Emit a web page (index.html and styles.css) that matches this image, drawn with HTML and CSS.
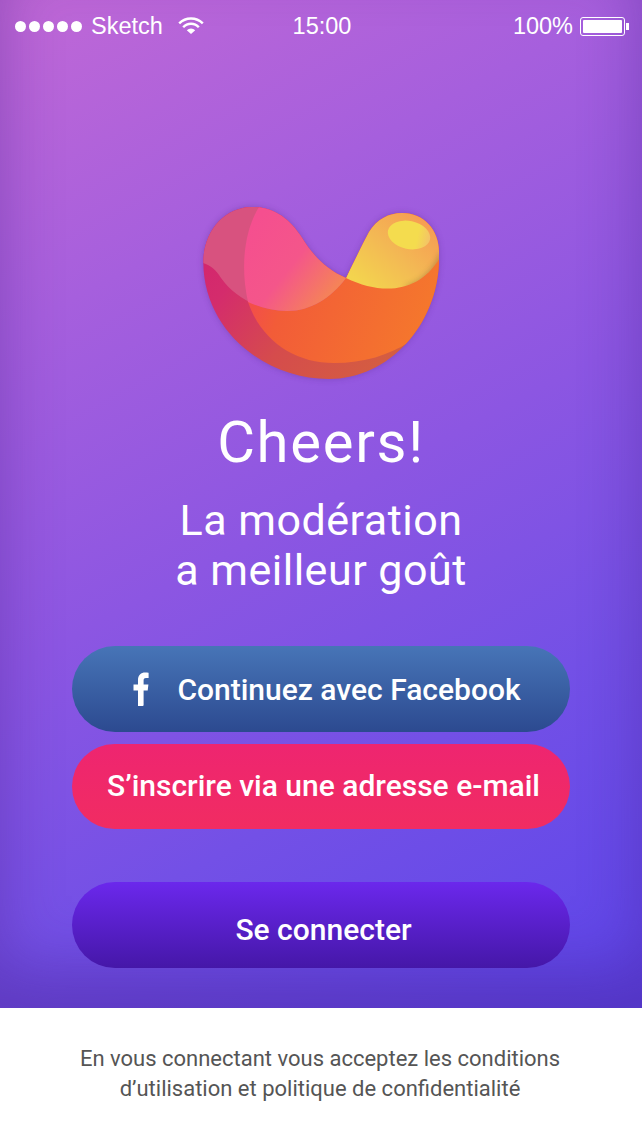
FILE: index.html
```html
<!DOCTYPE html>
<html lang="fr">
<head>
    <meta charset="UTF-8">
    <meta name="viewport" content="width=device-width, initial-scale=1.0">
    <title>Cheers!</title>
    <link rel="stylesheet" href="styles.css">
</head>
<body>

    <div class="hero">
        <!-- Barre de statut -->
        <div class="status-bar">
            <div class="status-left">
                <span class="signal"><i></i><i></i><i></i><i></i><i></i></span>
                <span>Sketch</span>
                <svg class="wifi" viewBox="0 0 26 17" width="26" height="17">
                    <path d="M1.2 6.4 A16.5 16.5 0 0 1 24.8 6.4" fill="none" stroke="#fff" stroke-width="2.4"/>
                    <path d="M5.2 10.2 A10.5 10.5 0 0 1 20.8 10.2" fill="none" stroke="#fff" stroke-width="2.4"/>
                    <path d="M8.8 13.2 A6 6 0 0 1 17.2 13.2 L13 17 Z" fill="#fff"/>
                </svg>
            </div>
            <span class="status-time">15:00</span>
            <div class="status-right">
                <span>100%</span>
                <span class="battery"><b></b></span>
                <span class="battery-cap"></span>
            </div>
        </div>

        <svg class="logo" viewBox="196 200 252 188" width="252" height="188">
            <defs>
                <linearGradient id="shell" x1="0" y1="0" x2="1" y2="0.6">
                    <stop offset="0" stop-color="#d2206f"/>
                    <stop offset="0.3" stop-color="#d42c6c"/>
                    <stop offset="0.6" stop-color="#d54c4c"/>
                    <stop offset="1" stop-color="#d4603f"/>
                </linearGradient>
                <linearGradient id="body" x1="0" y1="0.2" x2="1" y2="0.5">
                    <stop offset="0" stop-color="#f43e5e"/>
                    <stop offset="0.3" stop-color="#f25c38"/>
                    <stop offset="1" stop-color="#f5782c"/>
                </linearGradient>
                <linearGradient id="lobe" x1="0.1" y1="0.2" x2="0.9" y2="0.9">
                    <stop offset="0" stop-color="#f54f8f"/>
                    <stop offset="0.5" stop-color="#f4568a"/>
                    <stop offset="1" stop-color="#f58a50"/>
                </linearGradient>
                <linearGradient id="knob" x1="0.1" y1="0.9" x2="0.9" y2="0.1">
                    <stop offset="0" stop-color="#f3d44e"/>
                    <stop offset="0.45" stop-color="#f3b854"/>
                    <stop offset="1" stop-color="#f79552"/>
                </linearGradient>
                <linearGradient id="spot" x1="0" y1="0.5" x2="1" y2="0.5">
                    <stop offset="0.7" stop-color="#f4dc4e"/>
                    <stop offset="1" stop-color="#f3c268"/>
                </linearGradient>
                <clipPath id="blob">
                    <path d="M204.3 263 C204 232 225 207 253 207 C275 207 291 219 303 238 C314 256 328 270 347 278 C354 264 362 247 370 232 C378 219 390 213 403 213 C425 213 440 230 440 252 L440 262 C438 325 390 379 330 379 C265 379 205 330 204.3 263 Z"/>
                </clipPath>
                <clipPath id="knob-clip">
                    <path d="M347 278 L370 225 L400 205 L448 205 L440 259 C420 292 384 296 347 278 Z"/>
                </clipPath>
                <filter id="soft" x="-10%" y="-10%" width="120%" height="125%">
                    <feGaussianBlur stdDeviation="3"/>
                </filter>
                <filter id="soft-edge" x="-20%" y="-20%" width="140%" height="140%">
                    <feGaussianBlur stdDeviation="3"/>
                </filter>
            </defs>
            <path d="M204.3 263 C204 232 225 207 253 207 C275 207 291 219 303 238 C314 256 328 270 347 278 C354 264 362 247 370 232 C378 219 390 213 403 213 C425 213 440 230 440 252 L440 262 C438 325 390 379 330 379 C265 379 205 330 204.3 263 Z" fill="#5a2a90" opacity="0.4" filter="url(#soft)"/>
            <g clip-path="url(#blob)">
                <rect x="196" y="200" width="252" height="188" fill="url(#shell)"/>
                <!-- corps orange -->
                <path d="M244 200 L249 302 C262 340 295 363 335 363 C365 363 390 355 410 342 L448 310 L448 200 Z" fill="url(#body)"/>
                <!-- lobe rose -->
                <path d="M196 262 C208 262 216 268 222 278 C236 298 262 311 288 311 C312 311 332 298 347 278 L340 200 L196 200 Z" fill="#d8527f"/>
                <path d="M265 200 C247 222 240 262 249 302 C262 308 275 311 288 311 C312 311 332 298 347 278 L340 200 Z" fill="url(#lobe)"/>
                <!-- lobe jaune -->
                <path d="M347 278 L370 225 L400 205 L448 205 L440 259 C420 292 384 296 347 278 Z" fill="url(#knob)"/>
                <g clip-path="url(#knob-clip)">
                    <path d="M444 254 C436 274 424 284 408 289" fill="none" stroke="#5e4a2c" stroke-width="4" opacity="0.55" filter="url(#soft-edge)"/>
                </g>
                <ellipse cx="410" cy="235" rx="21.5" ry="14" transform="rotate(12 410 235)" fill="url(#spot)"/>
            </g>
        </svg>

        <h1 class="title">Cheers!</h1>
        <p class="tagline">La modération<br>a meilleur goût</p>

        <div class="actions">
            <a class="btn btn-facebook">
                <svg class="fb-icon" viewBox="0 0 16 34" width="16" height="34">
                    <path d="M5 34 V18.5 H0.5 V12.5 H5 V8 C5 3 8 0.5 12.2 0.5 C13.6 0.5 15 0.6 15.6 0.7 V6 H13 C11 6 10.6 7 10.6 8.6 V12.5 H15.4 L14.7 18.5 H10.6 V33 Q10.6 34 9.6 34 Z" fill="#fff"/>
                </svg>
                Continuez avec Facebook
            </a>
            <a class="btn btn-email">S’inscrire via une adresse e-mail</a>
            <a class="btn btn-login">Se connecter</a>
        </div>
    </div>

    <div class="legal">
        En vous connectant vous acceptez les conditions<br>
        d’utilisation et politique de confidentialité
    </div>

</body>
</html>
```

FILE: styles.css
```css
* {
    box-sizing: border-box;
}

body {
    margin: 0;
    font-family: Roboto, Arial, sans-serif;
    background-color: #fff;
}

.hero {
    height: 1008px;
    background: linear-gradient(152deg, #c068d6 0%, #a65fdd 25%, #8c56e2 50%, #7350e6 72%, #5c45ea 100%);
    box-shadow: inset 0 -40px 60px rgba(70, 30, 140, 0.4);
    display: flex;
    flex-direction: column;
    align-items: center;
    color: #fff;
}

/* Barre de statut */
.status-bar {
    width: 100%;
    height: 53px;
    padding: 0 13px 0 15px;
    display: flex;
    justify-content: space-between;
    align-items: center;
    font-family: "Liberation Sans", Arial, sans-serif;
    font-size: 23.5px;
    color: #fff;
}

.status-left,
.status-right {
    display: flex;
    align-items: center;
    width: 220px;
}

.status-right {
    justify-content: flex-end;
}

.signal {
    display: flex;
    gap: 3px;
    margin-right: 9px;
}

.signal i {
    width: 11px;
    height: 11px;
    border-radius: 50%;
    background-color: #fff;
}

.wifi {
    margin-left: 15px;
    margin-top: -3px;
}

.battery {
    width: 45px;
    height: 19px;
    margin-left: 7px;
    padding: 2px;
    border: 1px solid #fff;
    border-radius: 3px;
    display: flex;
}

.battery b {
    flex: 1;
    background-color: #fff;
    border-radius: 1px;
}

.battery-cap {
    width: 3px;
    height: 7px;
    margin-left: 1px;
    background-color: #fff;
}

.logo {
    display: block;
    margin-top: 147px;
    margin-bottom: 0;
}

.title {
    margin: 20px 0 0 0;
    font-size: 58px;
    line-height: 68px;
    font-weight: 400;
    letter-spacing: 1.7px;
}

.tagline {
    margin: 19px 0 0 0;
    font-size: 43px;
    line-height: 50px;
    font-weight: 400;
    letter-spacing: 0.5px;
    text-align: center;
}

.actions {
    width: 498px;
    margin-top: 51px;
    display: flex;
    flex-direction: column;
}

.btn {
    height: 86px;
    border-radius: 43px;
    display: flex;
    align-items: center;
    justify-content: center;
    font-size: 30px;
    font-weight: 500;
    color: #fff;
}

.btn-facebook {
    padding-left: 12px;
    background: linear-gradient(180deg, #4775b7 0%, #2c4a90 100%);
}

.fb-icon {
    margin-right: 28px;
}

.btn-email {
    margin-top: 12px;
    height: 85px;
    padding-left: 5px;
    padding-bottom: 2px;
    background: linear-gradient(180deg, #ee2570 0%, #f12c62 100%);
}

.btn-login {
    margin-top: 53px;
    padding-top: 9px;
    padding-left: 5px;
    background: linear-gradient(180deg, #6b28ec 0%, #4517a8 100%);
}

.legal {
    padding-top: 36px;
    padding-right: 2px;
    text-align: center;
    font-size: 22px;
    line-height: 30px;
    color: #555;
}
```
